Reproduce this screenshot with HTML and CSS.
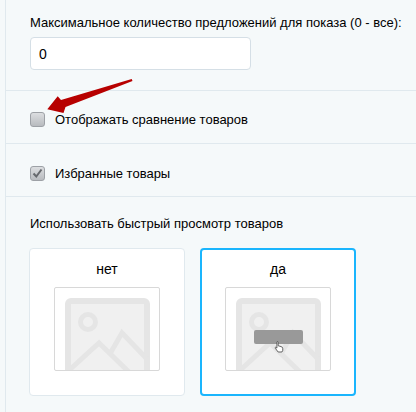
FILE: index.html
```html
<!DOCTYPE html>
<html lang="ru">
<head>
    <meta charset="UTF-8">
    <title>Настройки каталога</title>
    <link rel="stylesheet" href="styles.css">
</head>
<body>
    <div class="settings">
        <div class="section section-offers">
            <label class="field-label" for="offers">Максимальное количество предложений для показа (0 - все):</label>
            <input class="text-input" type="text" id="offers" value="0">
        </div>

        <div class="section section-check">
            <span class="checkbox"></span>
            <span class="check-label">Отображать сравнение товаров</span>
        </div>

        <div class="section section-check section-fav">
            <span class="checkbox">
                <svg class="check-mark" width="15" height="15" viewBox="0 0 15 15">
                    <path d="M3.500 7.500 L6.300 10.500 L11.500 3.500" fill="none" stroke="#66696d" stroke-width="2"/>
                </svg>
            </span>
            <span class="check-label">Избранные товары</span>
        </div>

        <div class="section section-view">
            <div class="field-label">Использовать быстрый просмотр товаров</div>
            <div class="cards">
                <div class="card">
                    <div class="card-title">нет</div>
                    <div class="thumb">
                        <svg width="104" height="82" viewBox="0 0 104 82">
                            <use href="#placeholder"/>
                        </svg>
                    </div>
                </div>
                <div class="card card-active">
                    <div class="card-title">да</div>
                    <div class="thumb">
                        <svg width="104" height="82" viewBox="0 0 104 82">
                            <use href="#placeholder"/>
                        </svg>
                        <span class="thumb-btn"></span>
                        <svg class="hand" width="10" height="12" viewBox="0 0 12 14">
                            <path d="M3.500 1.500 Q3.500 .5 4.300 .5 Q5 .5 5 1.500 V5.500 L8.500 6.500 Q10.500 7 10.500 9 V11 L9.500 13 H5 L1.500 8.500 Q1 7.500 2 7.300 L3.500 8.300 Z" fill="#fff" stroke="#444" stroke-width="1"/>
                        </svg>
                    </div>
                </div>
            </div>
        </div>
    </div>

    <!-- red arrow drawn over the screenshot -->
    <svg class="arrow" width="100" height="40" viewBox="0 0 100 40">
        <path d="M7.300 30.300 L17.700 17.300 L21 21 L91.700 0 L92.500 2 L25.500 28 L23.500 34 Z" fill="#b70000"/>
    </svg>

    <svg class="defs" width="0" height="0">
        <defs>
            <g id="placeholder">
                <rect x="13" y="13" width="79" height="80" rx="3" fill="#f0f0f0" stroke="#e5e5e5" stroke-width="6"/>
                <circle cx="33" cy="34" r="7.500" fill="none" stroke="#e5e5e5" stroke-width="5"/>
                <path d="M10 86 L44 55 L76 86 M56 64 L67 45 L92 71" fill="none" stroke="#e5e5e5" stroke-width="5"/>
            </g>
        </defs>
    </svg>
</body>
</html>
```

FILE: styles.css
```css
body {
    margin: 0;
    background-color: #f5f9fa;
    font-family: "Liberation Sans", Arial, sans-serif;
    font-size: 13px;
    color: #000;
    overflow: hidden;
}

.settings {
    height: 412px;
    margin-left: 5px;
    margin-right: -10px;
    border-left: 1px solid #e0e9ee;
    position: relative;
}

.section {
    border-bottom: 1px solid #e0e9ee;
    padding-left: 24px;
    box-sizing: border-box;
}

.section-offers {
    height: 91px;
    padding-top: 14px;
}

.section-check {
    height: 53px;
    display: flex;
    align-items: center;
    padding-top: 5px;
}

.section-fav {
    height: 53px;
    padding-top: 6px;
}

.section-view {
    border-bottom: none;
    padding-top: 18px;
}

.field-label {
    display: block;
    line-height: 18px;
}

.text-input {
    display: block;
    width: 221px;
    height: 33px;
    margin-top: 5px;
    padding: 0 8px;
    box-sizing: border-box;
    border: 1px solid #d5dfe6;
    border-radius: 4px;
    background-color: #fff;
    font-family: inherit;
    font-size: 14px;
    color: #000;
}

.checkbox {
    width: 15px;
    height: 15px;
    box-sizing: border-box;
    border: 1px solid #9da1a6;
    border-radius: 3px;
    background: linear-gradient(#dcdee0, #b8bbbf);
    position: relative;
    flex-shrink: 0;
}

.check-mark {
    position: absolute;
    left: -1px;
    top: -1px;
}

.check-label {
    margin-left: 10px;
}

.cards {
    display: flex;
    gap: 15px;
    margin-top: 15px;
    margin-left: -1px;
}

.card {
    width: 156px;
    height: 148px;
    box-sizing: border-box;
    border: 1px solid #e0e9ee;
    border-radius: 4px;
    background-color: #fff;
    padding-top: 11px;
}

.card-active {
    border: 2px solid #1ab5fd;
    padding-top: 10px;
}

.card-title {
    text-align: center;
    font-size: 14px;
    line-height: 18px;
}

.thumb {
    width: 106px;
    height: 84px;
    box-sizing: border-box;
    margin: 9px auto 0;
    border: 1px solid #d8d8d8;
    border-radius: 2px;
    background-color: #fff;
    overflow: hidden;
    position: relative;
}

.thumb svg {
    display: block;
}

.thumb-btn {
    position: absolute;
    left: 28px;
    top: 42px;
    width: 49px;
    height: 14px;
    border-radius: 2px;
    background-color: #999;
}

.thumb .hand {
    position: absolute;
    left: 48px;
    top: 53px;
}

.arrow {
    position: absolute;
    left: 40px;
    top: 79px;
    overflow: visible;
}

.defs {
    position: absolute;
}
```
